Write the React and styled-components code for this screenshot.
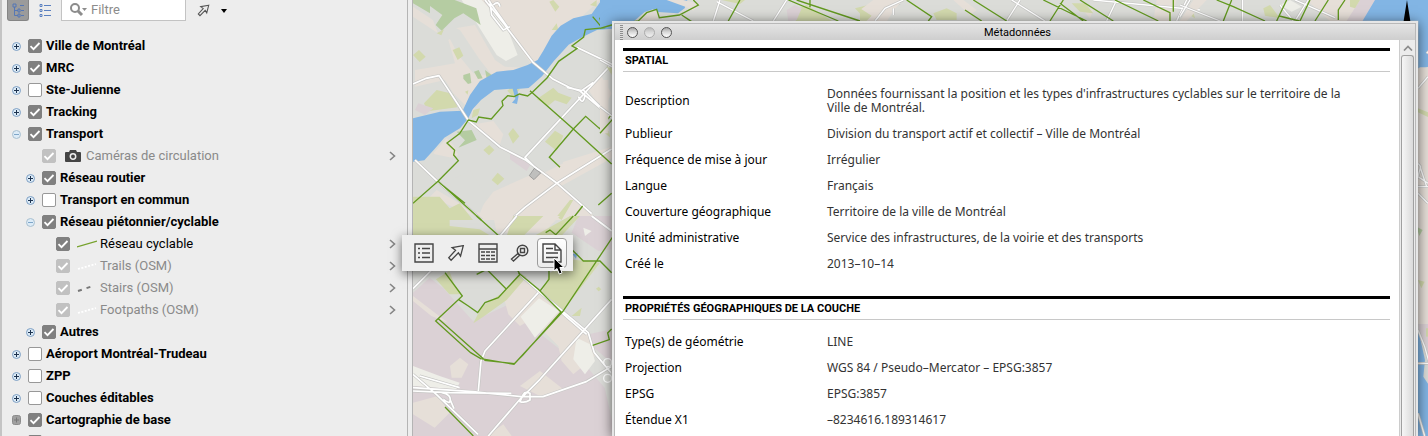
import { useState } from 'react'
import styled, { createGlobalStyle } from 'styled-components'

const layers = [
  { name: 'Ville de Montréal', level: 0, group: 'closed', checked: true },
  { name: 'MRC', level: 0, group: 'closed', checked: true },
  { name: 'Ste-Julienne', level: 0, group: 'closed', checked: false },
  { name: 'Tracking', level: 0, group: 'closed', checked: true },
  { name: 'Transport', level: 0, group: 'open', checked: true },
  { name: 'Caméras de circulation', level: 1, symbol: 'camera', checked: true, muted: true },
  { name: 'Réseau routier', level: 1, group: 'closed', checked: true },
  { name: 'Transport en commun', level: 1, group: 'closed', checked: false },
  { name: 'Réseau piétonnier/cyclable', level: 1, group: 'open', checked: true },
  { name: 'Réseau cyclable', level: 2, symbol: 'line', checked: true },
  { name: 'Trails (OSM)', level: 2, symbol: 'dots', checked: true, muted: true },
  { name: 'Stairs (OSM)', level: 2, symbol: 'dashes', checked: true, muted: true },
  { name: 'Footpaths (OSM)', level: 2, symbol: 'dots', checked: true, muted: true },
  { name: 'Autres', level: 1, group: 'closed', checked: true },
  { name: 'Aéroport Montréal-Trudeau', level: 0, group: 'closed', checked: false },
  { name: 'ZPP', level: 0, group: 'closed', checked: false },
  { name: 'Couches éditables', level: 0, group: 'closed', checked: false },
  { name: 'Cartographie de base', level: 0, group: 'locked', checked: true },
  { name: '', level: 0, checked: true, bare: true },
]

const sections = [
  {
    title: 'SPATIAL',
    rows: [
      ['Description', "Données fournissant la position et les types d'infrastructures cyclables sur le territoire de la Ville de Montréal."],
      ['Publieur', 'Division du transport actif et collectif – Ville de Montréal'],
      ['Fréquence de mise à jour', 'Irrégulier'],
      ['Langue', 'Français'],
      ['Couverture géographique', 'Territoire de la ville de Montréal'],
      ['Unité administrative', 'Service des infrastructures, de la voirie et des transports'],
      ['Créé le', '2013–10–14'],
    ],
  },
  {
    title: 'PROPRIÉTÉS GÉOGRAPHIQUES DE LA COUCHE',
    rows: [
      ['Type(s) de géométrie', 'LINE'],
      ['Projection', 'WGS 84 / Pseudo–Mercator – EPSG:3857'],
      ['EPSG', 'EPSG:3857'],
      ['Étendue X1', '–8234616.189314617'],
    ],
  },
]

const App = () => {
  return (
    <Page>
      <GlobalStyle />
      <Sidebar>
        <Toolbar />
        <Tree>
          {layers.map((layer, i) => (
            <Layer key={i} layer={layer} />
          ))}
        </Tree>
      </Sidebar>
      <Splitter />
      <MapArea>
        <MapDrawing />
        <MetadataWindow />
      </MapArea>
      <LayerTools />
    </Page>
  )
}

export default App

const Toolbar = () => {
  return (
    <Bar>
      <ModeButton $active aria-label="Arborescence">
        <svg width="12" height="16" viewBox="0 0 12 16" fill="none" stroke="#5577b5">
          <path d="M2.5 5v8.5H6M2.5 8.5H6M8 3.5h4M9 8.5h3M9 13.5h3" />
          <path d="M1 2h3v3H1zM6 7h2v3H6zM6 12h2v3H6z" />
        </svg>
      </ModeButton>
      <ModeButton aria-label="Liste">
        <svg width="12" height="16" viewBox="0 0 12 16" fill="none" stroke="#5b80c0">
          <path d="M5 3.5h7M5 8.5h7M5 13.5h7" />
          <path d="M1 2.5h2v2H1zM1 7.5h2v2H1zM1 12.5h2v2H1z" />
        </svg>
      </ModeButton>
      <Search>
        <svg width="18" height="14" viewBox="0 0 18 14" fill="none" stroke="#8c8c8c">
          <circle cx="5" cy="5" r="4" strokeWidth="2" />
          <path d="M8 8l4 4" strokeWidth="3" />
          <path d="M12 5h5l-2.500 3z" fill="#8c8c8c" stroke="none" />
        </svg>
        <SearchInput aria-label="Filtre" placeholder="Filtre" />
      </Search>
      <PlainButton aria-label="Sélection">
        <svg width="13" height="13" viewBox="0 0 20 20" fill="none" stroke="#555" strokeWidth="1.700">
          <path d={arrowPath} />
        </svg>
      </PlainButton>
      <PlainButton aria-label="Options">
        <svg width="6" height="4" viewBox="0 0 6 4">
          <path d="M0 0h6L3 4z" />
        </svg>
      </PlainButton>
    </Bar>
  )
}

const Layer = ({ layer }) => {
  const [checked, setChecked] = useState(layer.checked)
  return (
    <Row $level={layer.level}>
      <Expander group={layer.group} />
      <RowLabel $muted={layer.muted} $bold={Boolean(layer.group)}>
        <CheckBox>
          <input
            type="checkbox"
            aria-label={layer.bare ? 'Couche' : undefined}
            checked={checked}
            onChange={() => setChecked(!checked)}
          />
          {checked && (
            <svg width="14" height="14" viewBox="0 0 14 14" fill="none" stroke="#fff" strokeWidth="1.800">
              <path d="M2.500 7.200l3 3 6-6.200" />
            </svg>
          )}
        </CheckBox>
        {layer.symbol && <Symbol type={layer.symbol} />}
        <span>{layer.name}</span>
      </RowLabel>
      {layer.symbol && (
        <PlainButton aria-label={`Outils ${layer.name}`}>
          <svg width="7" height="10" viewBox="0 0 7 10" fill="none" stroke="#858585" strokeWidth="1.600">
            <path d="M1 1l4.500 4L1 9" />
          </svg>
        </PlainButton>
      )}
    </Row>
  )
}

const Expander = ({ group }) => {
  if (!group) return <ExpanderSpace />
  if (group === 'locked') {
    return (
      <ExpanderButton aria-label="Ouvrir">
        <svg width="9" height="10" viewBox="0 0 9 10">
          <rect x="0.500" y="0.500" width="8" height="9" rx="2" fill="#a0a0a0" stroke="#8c8c8c" />
          <path d="M2 5h5M4.500 2.500v5" stroke="#787878" />
        </svg>
      </ExpanderButton>
    )
  }
  const open = group === 'open'
  return (
    <ExpanderButton aria-label={open ? 'Fermer' : 'Ouvrir'}>
      <svg width="9" height="9" viewBox="0 0 9 9">
        <circle cx="4.500" cy="4.500" r="4" fill="#dcebf7" stroke={open ? '#a9bfd0' : '#7f9fc4'} />
        <path d={open ? 'M2 4.500h5' : 'M2 4.500h5M4.500 2v5'} stroke={open ? '#7fa6c8' : '#1d3350'} />
      </svg>
    </ExpanderButton>
  )
}

const Symbol = ({ type }) => {
  if (type === 'camera') {
    return (
      <SymbolSlot>
        <svg width="16" height="12" viewBox="0 0 16 12">
          <path d="M1 2h3l1-2h6l1 2h3q1 0 1 1v8q0 1-1 1H1q-1 0-1-1V3q0-1 1-1z" fill="#444" />
          <circle cx="8" cy="6.500" r="2.700" fill="none" stroke="#eee" strokeWidth="1.500" />
        </svg>
      </SymbolSlot>
    )
  }
  return (
    <SymbolSlot>
      <svg width="20" height="8" viewBox="0 0 20 8" fill="none">
        {type === 'line' && <path d="M0 7L20 1" stroke="#76a22c" strokeWidth="1.300" />}
        {type === 'dots' && <path d="M1 7L19 2" stroke="#fff" strokeWidth="1.800" strokeDasharray="2 1.500" />}
        {type === 'dashes' && <path d="M1 7L16 2" stroke="#777" strokeWidth="2" strokeDasharray="4 5" />}
      </svg>
    </SymbolSlot>
  )
}

const arrowPath = 'M18 2L5.700 4l3.800 3L2 15.200 4.600 18l8-8.200 2.400 3.700z'

const LayerTools = () => {
  return (
    <Tools role="toolbar" aria-label="Outils de couche">
      <ToolButton aria-label="Légende">
        <ToolIcon viewBox="0 0 20 20">
          <path d="M1 1h18v18H1z" />
          <path d="M8 5.500h8M8 10h8M8 14.500h8M4 5.500h2M4 10h2M4 14.500h2" />
        </ToolIcon>
      </ToolButton>
      <ToolButton aria-label="Sélection">
        <ToolIcon viewBox="-1 -1 22 22">
          <path d={arrowPath} />
        </ToolIcon>
      </ToolButton>
      <ToolButton aria-label="Table">
        <ToolIcon viewBox="0 0 20 20">
          <path d="M1 1h18v18H1zM1 6h18" />
          <path d="M3 9h4M8 9h4M13 9h4M3 12.500h4M8 12.500h4M13 12.500h4M3 16h4M8 16h4M13 16h4" />
        </ToolIcon>
      </ToolButton>
      <ToolButton aria-label="Zoom sur la couche">
        <ToolIcon viewBox="0 0 20 20">
          <circle cx="12.500" cy="7.500" r="5.300" />
          <path d="M10.500 5.500h4v4h-4zM8 10.500l1.700 1.700L3.500 18 1.500 16z" />
        </ToolIcon>
      </ToolButton>
      <ToolButton $active aria-label="Métadonnées">
        <ToolIcon viewBox="0 0 20 20">
          <path d="M1 1h12l6 6v12H1zM13 1v6h6" />
          <path d="M4 5.500h7M4 10h12M4 14.500h12" />
        </ToolIcon>
        <Pointer width="13" height="18" viewBox="0 0 13 18">
          <path d="M1 1v13l3-2.500 2.300 5.500 2.700-1.200L6.800 10.500H11z" fill="#000" stroke="#fff" />
        </Pointer>
      </ToolButton>
    </Tools>
  )
}

const MetadataWindow = () => {
  return (
    <Window>
      <TitleBar>
        <Grip />
        <WindowButton aria-label="Fermer" />
        <WindowButton aria-label="Réduire" $faded />
        <WindowButton aria-label="Agrandir" />
        <h1>Métadonnées</h1>
      </TitleBar>
      <WindowBody>
        <Sheet>
          {sections.map((section) => (
            <Section key={section.title}>
              <h2>{section.title}</h2>
              <Properties>
                <tbody>
                  {section.rows.map(([label, value]) => (
                    <tr key={label}>
                      <th scope="row">{label}</th>
                      <td>{value}</td>
                    </tr>
                  ))}
                </tbody>
              </Properties>
            </Section>
          ))}
        </Sheet>
        <ScrollTrack>
          <ScrollUp aria-label="Défiler vers le haut">
            <svg width="10" height="6" viewBox="0 0 10 6" fill="none" stroke="#8c8c8c" strokeWidth="1.700">
              <path d="M1 5.500L5 1.500l4 4" />
            </svg>
          </ScrollUp>
          <ScrollThumb />
        </ScrollTrack>
      </WindowBody>
    </Window>
  )
}

const Roads = ({ lines, width = 6 }) => (
  <g fill="none" strokeLinejoin="round">
    <path d={lines} stroke="#c6c6c4" strokeWidth={width + 4} />
    <path d={lines} stroke="#fff" strokeWidth={width} />
  </g>
)

const Paths = ({ lines }) => <path d={lines} fill="none" stroke="#62991f" strokeWidth="4" />

const water = '#82b5e4'
const peach = '#e6dfd8'
const park = '#d2d9ad'
const wood = '#b5cca2'
const mauve = '#dbd1d5'
const sand = '#eeeee8'

// Each group is a tile drawn at three units per pixel
const MapDrawing = () => {
  return (
    <MapSvg viewBox="413 0 1015 436" preserveAspectRatio="xMinYMin slice">
      <path d="M413 0h1015v436H413z" fill="#dbdcd8" />
      <g transform="translate(380 0) scale(.3333)">
        <path fill={peach} d="M300 0H660L600 55 530 85 480 175 455 195 425 150 370 75zM99 20l60 40 15 40-75-50zM195 90l90-15 60 105 30 20 75 5-40 25-60 10-50 30-20 70-60-60-25-40-90 20v-50l60-10 60-10-20-70 30-25zM160 460l40-45 20 20 15 30-20 8-50-10zM270 375l70-12 30 40-10 30-80-50zM290 640l50-65 180-80 175-55v35L540 560l115 100H310L150 590l20-20zM620 260l45-30 30 50-20 40-30-20z" />
        <path fill="#dbdcd8" d="M180 60l60 30 60 90 40 50-60-10-45-55zM420 470l90-40 40 60-60 30zM180 560l90-50 50 80-20 50z" />
        <path fill={sand} d="M245 0h60l75 80 33 85-35 18-28-18-60-95z" />
        <path fill={wood} d="M99 0h125l65 25 13 50-52-35-27 15-38 37-18-17 20-30-37-27v22l-51-30zM250 225l20-6 4 30-10 3-14-16zM282 215l14-5 12 25-14 2zM315 210l20 15v15l-15-5zM230 395l45-5 15 30-55 23 20-22z" />
        <path fill={park} d="M99 165l18-15 20 20-18 16zM218 150l20-8 12 25-17 13zM508 5l12-5 18 20-12 15zM630 15l20-15v20zM515 90l15-20 5 20zM132 310l38-40 50 12 12 40-90 12zM275 355l5-25 20-5-6 20zM395 262l25 5-20 25-18-20zM470 298l50-35 15 15 40 15-15 20-35-12-20 16zM385 402l14-18 19 25-19 22zM495 425l30-33 25 15-20 45zM310 450l18-15 15 15-16 16zM335 540l18-22 20 18-20 20zM99 590l80 0 30 35 30-15 40 50H99zM530 650l40-50 10 0-35 60zM170 100l22-12-8 18zM680 200l15-10v30zM675 400l12-8 3 20zM255 275l10-4-2 13z" />
        <path fill={mauve} d="M105 330l10-20 45 15-25 20zM390 462h20l45 25-15 26-50-35z" />
        <path fill={water} d="M800 0H665l-30 42-55 13-38 22-27 30-25 45-17 28-30 15-43 15-50 5-50 28-30 42-22 47-68 3-81 20v130l34-4 30-33 30-35 47-28 25-30 13-27 25-28 40-30 55-4 8 30-10 12 15 4 5-25-5-20 35-3 40-35 35-45 45-50 40-22 45-22 65-5z" />
        <Roads width={5} lines="M99 252l40-17 38-8 20 30 68 104 95 80 75 38 95 70 105 92M177 227l-40 8M315 0l60 75 5 8 80 105 60 50 50 25 30 10 95 80M325 0l60 85M330 5l5 40 35 45 20-10M340 15q15-15 20 5M590 142l105 50-260 280 40 40M105 480l65 62 135 118M695 447l-165 103-95 72-45 40M560 262l45 10 35-25M595 290q15 30 20-5M610 270l85 85" />
        <Paths lines="M99 610l75-66 61-62-14-17 3-14-23-22 38-28 26-41 24 6 7-15 38 6 35-40-3-13 17-17 20 3 15-8 25 6 15-12 43-42 35-50 55-38-15-8 35-27 5-22 60-6M450 272l130 115 115 105M540 502l-32-30 72-85 37-38 42 37 36-42M174 544l130 116M180 550l75 60M655 615l40-35M638 50l30 35-8-30 25-3M575 660l33-42" />
        <path d="M463 505l19 14-20 20-14-12z" fill="#bfbfbd" stroke="#858585" strokeWidth="2" />
      </g>
      <g transform="translate(380 216) scale(.3333)">
        <path fill={mauve} d="M99 230l50-45 40 30 90 100 150-70 120-20 0 20-110 30-20 30 115 90 80 50 60 70 40 175H99zM575 50l20-50h100v100l-40 5zM600 360l95-20v100z" />
        <path fill={peach} d="M370 240l55-50 50 35 65 65 90 70 15 60-65 55-35-40-10-45-80-80-35 20-35-35zM99 240l105 80-50-20-55-45zM340 0h200l-50 50H350zM99 560l75-20 35 50-45 45-65-40zM210 450l30-25 25 20-20 40-30 0zM420 510l60-45 70 55-60 25zM320 660l50-35 25 35z" />
        <path fill={sand} d="M422 302l55-55 60 38-72 80zM580 430l10-65 40 20 15 50-30 40zM99 450l80 30 60 20-10 20-130-10zM610 35l25 10-20 15z" />
        <path fill={park} d="M99 0h110v30l90 10 50 30H99zM400 0h90l-60 60h-50zM570 0h30l-75 80-80-10zM168 190l40-25 15 40 20 30-35 0zM280 322l25-50 60-40 55-60 20 10-60 70-70 50zM510 170l60-40 90 10-115 150-60-60zM575 300l30-25-5 25zM648 218l8-6 8 8-8 6z" />
        <path fill={water} d="M578 115l15-5-5 18z" />
        <Roads width={5} lines="M99 218l115-115L360 60 410 0M635 0l60 45M420 175l55 50 150 125 18 60 50 60M475 230L315 405l-12 30-8 90M695 250L480 490l-60 60-95 110M99 475l70 60 125 120M99 515l180 12 145 15h65l130-45 75-45M99 525l110 5 185 2M119 480l120 35M430 535q5-10 20-3v20q-15 10-30 5zM185 530q30 5 25 25 0 10-20-5M545 290l75 65M210 550l12 28" />
        <g fill="none" stroke="#fff" strokeWidth="4">
          <circle cx="683" cy="440" r="12" />
          <circle cx="683" cy="487" r="12" />
        </g>
        <Paths lines="M290 0l125 112M195 170l52 70-80 75 105 95 30 18 100 17 25-27 122-132L720 30M175 308l135 120M235 250l30 20 28 20 22-30 40-15 65-70-45-80M415 170l60 50 68 68-115 130-25 25-90-10M290 175l30-15 58 58M580 0l-75 80M497 50l13-8 25 20M480 225l27-35v-40M555 80l55 55h50l35 35M195 573l85 87M638 388l50-17-5-20 12-12" />
      </g>
      <g transform="translate(600 0) scale(.3333)">
        <path fill={water} d="M0 0h262l-8 25-20 15-60-4-15-8-25 8-35 30-99 20z" />
        <path fill={peach} d="M145 35l25-7 5 30-60 8zM200 0l50 0 50 12-20 20-20-10zM0 240h25v160H0zM830 0l70 0-40 65h-30z" />
        <path fill={park} d="M570 35l50-20 80 50H590zM765 25l40-10 15 30-30 6zM365 0h70l-15 12zM20 200l15 5v20z" />
        <path fill={mauve} d="M560 30l25-15 20 10-15 35-25 3z" />
        <Roads width={4} lines="M360 0l-20 63M350 5l110 58M560 0l-40 63M900 10l-45 10-35 45M0 180l45 25M0 320l45 35" />
        <Paths lines="M0 85l35-10 80-12 25-25 30-10 8 25 60-8 57-30-15-15M420 0l-35 63M245 45l30 20M565 0l150 63M590 0l190 63M630 0v22M0 400l45-50" />
      </g>
      <g transform="translate(860 0) scale(.3333)">
        <path fill={peach} d="M40 0h90L70 63H0V30zM280 0h30l40 30-20 15zM890 0h60l-20 63h-50zM660 20l40 10-10 25z" />
        <path fill={park} d="M0 25l35 22-15 15H0zM220 40l40-15 30 15v20h-60zM635 10l40 0 25 30-40-5zM980 40l20-5 5 20z" />
        <Roads width={4} lines="M130 0L75 25 45 63M100 25v20M480 0l-40 63M455 0l100 63M770 0l-30 63M700 0l320 30M980 0l-30 63" />
        <Paths lines="M140 0l75 50-10 13M340 0l100 63M315 30l50 33M550 0l130 63M600 10l70 53M610 0l-40 63M660 0l100 63M765 0l130 63M850 0l80 38v25M940 0v35" />
      </g>
      <g transform="translate(1180 0) scale(.3333)">
        <path fill={peach} d="M40 0h40L20 63H0zM380 0h210l-20 63h-120z" />
        <path fill={mauve} d="M540 0h60l-40 63h-60z" />
        <path fill={park} d="M250 25l20-10 30 40-45-8zM510 0h30l-15 25-15-5z" />
        <path fill={sand} d="M300 15l30-15 35 20-30 15z" />
        <path fill={water} d="M585 0h160v200l-30 15V62H548z" />
        <Roads width={4} lines="M0 15l120 48M30 0L0 50M188 0v63M345 0l120 53M385 0l-40 63M300 15l40 48" />
        <Paths lines="M110 0l50 20 95 43M155 0l-25 63M320 0l-30 63M390 0l-30 63M445 0l-40 63M298 48l60 15M495 0l-20 30v30" />
        <path d="M681 0l10 63h-20z" />
        <path fill={peach} d="M690 220l30-18h30v770h-60z" />
        <path fill={park} d="M714 325l30 12v14l-30-14zM714 840l20 5-10 20z" />
        <path fill={wood} d="M710 680l18 10-10 18z" />
        <path fill={water} d="M690 970l25 20 20 90-5 50 20 30v148h-60z" />
        <path fill={mauve} d="M715 972h30v98l-25-60z" />
        <path fill={park} d="M738 985h10v25h-10z" />
        <Roads width={4} lines="M714 265l30-35M714 490l8 10-8 30 30 20M714 580l30 30M714 560h30M714 990l20 50 14 50M714 1090h34M714 1240l20 68M740 160l8-8M720 500l20 60" />
      </g>
    </MapSvg>
  )
}

const GlobalStyle = createGlobalStyle`
  * {
    box-sizing: border-box;
  }

  body {
    margin: 0;
    font-family: Roboto, "Liberation Sans", sans-serif;
    font-size: 13px;
    color: #000;
  }

  button {
    padding: 0;
    border: 0;
    background: none;
  }

  svg {
    display: block;
  }
`

const Page = styled.div`
  position: relative;
  display: flex;
  height: 100vh;
  overflow: hidden;
  background: #ededed;
`

const Sidebar = styled.aside`
  flex: 0 0 408px;
  overflow: hidden;
  border-right: 1px solid #b4b4b4;
  box-shadow: inset 2px 0 #c4c4c4, inset 1px 0 #ededed;
`

const Splitter = styled.div`
  flex: 0 0 5px;
  border-right: 1px solid #b4b4b4;
`

const MapArea = styled.main`
  position: relative;
  flex: 1;
  min-width: 0;
  overflow: hidden;
`

const MapSvg = styled.svg`
  width: 100%;
  height: 100%;
`

const Bar = styled.div`
  display: flex;
  align-items: center;
  height: 21px;
  margin-bottom: 14px;
  padding-left: 7px;
`

const ModeButton = styled.button`
  display: flex;
  justify-content: center;
  align-items: center;
  width: 22px;
  height: 21px;
  margin-right: 5px;
  border: 1px solid ${(props) => (props.$active ? '#858585' : 'transparent')};
  border-top: 0;
  border-radius: 0 0 3px 3px;
  background: ${(props) => (props.$active ? '#9b9b9b' : 'none')};
`

const Search = styled.div`
  display: flex;
  align-items: center;
  gap: 3px;
  width: 125px;
  height: 21px;
  margin-right: 11px;
  padding-left: 8px;
  border: 1px solid #c3c3c3;
  border-top: 0;
  background: #fff;
`

const SearchInput = styled.input`
  flex: 1;
  min-width: 0;
  padding: 0;
  border: 0;
  outline: 0;
  background: none;
  font: 13px/18px Roboto, sans-serif;

  &::placeholder {
    color: #8c8c8c;
  }
`

const PlainButton = styled.button`
  display: flex;
  margin-right: 11px;
`

const Tree = styled.ul`
  margin: 0;
  padding: 0;
  list-style: none;
`

const Row = styled.li`
  display: flex;
  align-items: center;
  height: 22px;
  padding-left: ${(props) => 12 + props.$level * 14}px;
`

const ExpanderButton = styled.button`
  display: flex;
  margin-right: 7px;
`

const ExpanderSpace = styled.span`
  width: 16px;
`

const RowLabel = styled.label`
  display: flex;
  flex: 1;
  align-items: center;
  line-height: 22px;
  white-space: nowrap;
  font-weight: ${(props) => (props.$bold ? 700 : 400)};
  color: ${(props) => (props.$muted ? '#8a8a8a' : '#000')};

  input {
    opacity: ${(props) => (props.$muted ? 0.4 : 1)};
  }
`

const CheckBox = styled.span`
  display: grid;
  margin-right: 4px;

  input {
    grid-area: 1 / 1;
    appearance: none;
    width: 14px;
    height: 14px;
    margin: 0;
    border: 1px solid #989898;
    border-radius: 2px;
    background: #fff;
  }

  input:checked {
    border-color: #808080;
    background: #808080;
  }

  svg {
    grid-area: 1 / 1;
    pointer-events: none;
    z-index: 1;
  }
`

const SymbolSlot = styled.span`
  display: flex;
  flex: 0 0 26px;
  justify-content: center;
`

const Tools = styled.div`
  position: absolute;
  top: 235px;
  left: 402px;
  display: flex;
  gap: 2px;
  padding: 3px 6px 3px 7px;
  background: #eee;
  box-shadow: 0 3px 10px rgba(0, 0, 0, 0.55);
`

const ToolButton = styled.button`
  position: relative;
  display: flex;
  justify-content: center;
  align-items: center;
  width: 30px;
  height: 30px;
  border: 1px solid ${(props) => (props.$active ? '#9c9c9c' : 'transparent')};
  border-radius: 4px;
  background: ${(props) => (props.$active ? 'linear-gradient(#fff, #ececec)' : 'none')};
`

const ToolIcon = styled.svg`
  width: 20px;
  height: 20px;
  fill: none;
  stroke: #454545;
  stroke-width: 1.4;
`

const Pointer = styled.svg`
  position: absolute;
  top: 18px;
  left: 15px;
`

const Window = styled.section`
  position: absolute;
  top: 21px;
  right: 10px;
  bottom: 0;
  left: 199px;
  display: flex;
  flex-direction: column;
  padding: 2px 2px 0;
  background: #e6e6e6;
  box-shadow: 0 2px 12px rgba(0, 0, 0, 0.6);
`

const TitleBar = styled.header`
  display: flex;
  flex: 0 0 17px;
  align-items: center;
  gap: 6px;
  padding-left: 5px;
  border: 1px solid #b8b8b8;
  border-bottom: 0;
  background: linear-gradient(#e4e4e4, #cecece);

  h1 {
    flex: 1;
    margin: 0;
    padding: 1px 58px 0 0;
    font-size: 11px;
    font-weight: 400;
    line-height: 15px;
    text-align: center;
  }
`

const Grip = styled.span`
  width: 3px;
  height: 15px;
  margin-right: -2px;
  background: repeating-linear-gradient(#8c8c8c 0 1px, #dedede 1px 2px);
`

const WindowButton = styled.button`
  width: 11px;
  height: 11px;
  border: 1px solid ${(props) => (props.$faded ? '#999' : '#555')};
  border-radius: 50%;
  background: linear-gradient(#a8a8a8, #d8d8d8 45%, #fff);
  opacity: ${(props) => (props.$faded ? 0.7 : 1)};
`

const WindowBody = styled.div`
  display: flex;
  flex: 1;
  min-height: 0;
  border: 1px solid #b8b8b8;
  border-width: 0 1px;
  background: #fff;
`

const Sheet = styled.div`
  flex: 1;
  min-width: 0;
  overflow: hidden;
  padding: 8px 9px 0 8px;
  font-family: "Noto Sans", "Open Sans", sans-serif;
  font-size: 12px;
  line-height: 14px;
`

const Section = styled.section`
  margin-bottom: 19px;
  border-top: 3px solid #000;

  h2 {
    margin: 0 0 9px;
    padding: 0 2px;
    border-bottom: 1px solid #c8c8c8;
    font-family: Roboto, "Liberation Sans", sans-serif;
    font-size: 11px;
    font-weight: 700;
    line-height: 20px;
  }
`

const Properties = styled.table`
  width: 100%;
  border-collapse: collapse;

  th,
  td {
    padding: 6px 2px;
    text-align: left;
    font-weight: 400;
  }

  th {
    width: 202px;
  }

  td {
    padding-right: 28px;
    color: #333;
  }
`

const ScrollTrack = styled.div`
  display: flex;
  flex: 0 0 16px;
  flex-direction: column;
  padding: 0 1px;
  border-left: 1px solid #ccc;
  background: #ebebeb;
`

const ScrollUp = styled.button`
  display: flex;
  flex: 0 0 15px;
  justify-content: center;
  align-items: center;
`

const ScrollThumb = styled.div`
  flex: 1;
  border: 1px solid #a0a0a0;
  border-bottom: 0;
  border-radius: 3px 3px 0 0;
  background: linear-gradient(90deg, #f6f6f6, #dadada);
`
